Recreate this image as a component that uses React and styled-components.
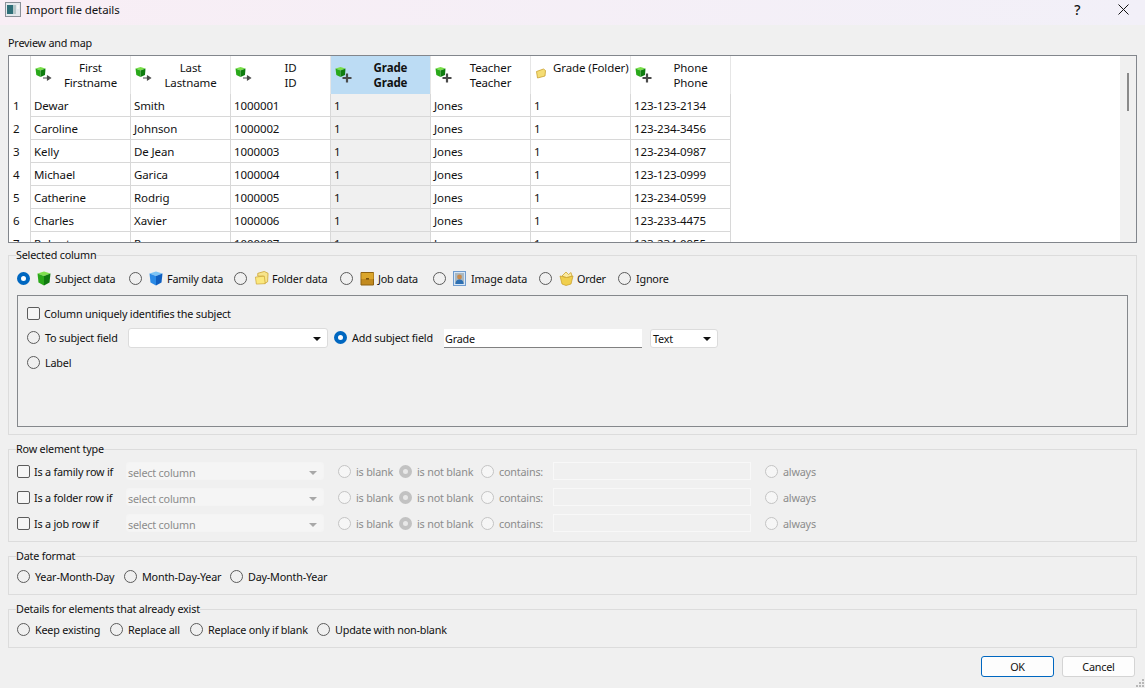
import React from 'react';
import styled, { createGlobalStyle } from 'styled-components';

const GlobalStyle = createGlobalStyle`
  html, body {
    margin: 0;
    padding: 0;
    background: #f0f0f0;
  }
  * {
    box-sizing: border-box;
  }
`;

const columns = [
  { top: 'First', bottom: 'Firstname', icon: 'link' },
  { top: 'Last', bottom: 'Lastname', icon: 'link' },
  { top: 'ID', bottom: 'ID', icon: 'link' },
  { top: 'Grade', bottom: 'Grade', icon: 'add', selected: true },
  { top: 'Teacher', bottom: 'Teacher', icon: 'add' },
  { top: 'Grade (Folder)', icon: 'folder' },
  { top: 'Phone', bottom: 'Phone', icon: 'add' },
];

const rows = [
  ['Dewar', 'Smith', '1000001', '1', 'Jones', '1', '123-123-2134'],
  ['Caroline', 'Johnson', '1000002', '1', 'Jones', '1', '123-234-3456'],
  ['Kelly', 'De Jean', '1000003', '1', 'Jones', '1', '123-234-0987'],
  ['Michael', 'Garica', '1000004', '1', 'Jones', '1', '123-123-0999'],
  ['Catherine', 'Rodrig', '1000005', '1', 'Jones', '1', '123-234-0599'],
  ['Charles', 'Xavier', '1000006', '1', 'Jones', '1', '123-233-4475'],
  ['Robert', 'Rare', '1000007', '1', 'Jones', '1', '123-234-0955'],
];

const dataTypes = [
  { label: 'Subject data', icon: 'cube', checked: true, width: 112 },
  { label: 'Family data', icon: 'blue', width: 105 },
  { label: 'Folder data', icon: 'folder', width: 106 },
  { label: 'Job data', icon: 'job', width: 93 },
  { label: 'Image data', icon: 'image', width: 106 },
  { label: 'Order', icon: 'order', width: 79 },
  { label: 'Ignore', width: 60 },
];

const rowTypes = ['Is a family row if', 'Is a folder row if', 'Is a job row if'];

const Page = styled.div`
  width: 1145px;
  height: 688px;
  position: relative;
  overflow: hidden;
  background: #f0f0f0;
  color: #111;
  font-family: 'Noto Sans', 'Liberation Sans', sans-serif;
  font-size: 10.8px;
  letter-spacing: -0.2px;
`;

const TitleBar = styled.div`
  height: 25px;
  display: flex;
  align-items: center;
  padding: 0 0 7px 5px;
  background: linear-gradient(90deg, #f8eef5, #f2f0f8);
  font-size: 11.5px;
  letter-spacing: -0.1px;
`;

const TitleText = styled.span`
  margin-left: 5px;
  flex: 1;
`;

const TitleButton = styled.button`
  width: 46px;
  height: 18px;
  padding: 0 0 0 3px;
  border: 0;
  background: none;
  display: flex;
  align-items: center;
  justify-content: center;
  font: 500 14px 'Noto Sans', sans-serif;
  color: #111;
`;

const Body = styled.div`
  padding: 0 8px;
  display: flex;
  flex-direction: column;
`;

const SectionLabel = styled.div`
  height: 30px;
  padding-top: 10px;
  line-height: 15px;
`;

const TableFrame = styled.div`
  height: 188px;
  border: 1px solid #82868c;
  background: #fff;
  position: relative;
  overflow: hidden;
  font-size: 11.5px;
  letter-spacing: -0.1px;
`;

const GridTable = styled.div`
  display: grid;
  grid-template-columns: 22px repeat(7, 100px);
  grid-auto-rows: 23px;
  grid-template-rows: 38px;
  width: 722px;
`;

const HeaderCell = styled.div`
  display: flex;
  align-items: flex-start;
  padding: 4px 2px 0 4px;
  border-right: 1px solid #e6e6e6;
  line-height: 15px;
  background: ${(p) => (p.$selected ? '#bcdcf4' : '#fff')};
  font-weight: ${(p) => (p.$selected ? 700 : 400)};
`;

const HeaderIcon = styled.span`
  width: 18px;
  height: 18px;
  margin-top: 6px;
  flex: none;
`;

const HeaderLabel = styled.div`
  flex: 1;
  text-align: center;
  white-space: nowrap;
`;

const NumberCell = styled.div`
  padding-left: 4px;
  line-height: 24px;
  border-right: 1px solid #d8d8d8;
`;

const Cell = styled.div`
  padding-left: 3px;
  line-height: 24px;
  border-right: 1px solid #d8d8d8;
  border-bottom: 1px solid #d8d8d8;
  background: ${(p) => (p.$selected ? '#f0f0f0' : '#fff')};
`;

const ScrollTrack = styled.div`
  position: absolute;
  top: 0;
  right: 0;
  bottom: 0;
  width: 16px;
  background: #f0f0f0;
`;

const ScrollThumb = styled.div`
  position: absolute;
  top: 17px;
  left: 7px;
  width: 2px;
  height: 38px;
  background: #8a8a8a;
`;

const Group = styled.fieldset`
  height: ${(p) => p.$height}px;
  margin: ${(p) => p.$top}px 0 0;
  padding: ${(p) => p.$pad}px 8px 0;
  min-width: 0;
  border: 1px solid #dcdcdc;
`;

const Legend = styled.legend`
  padding: 0;
  margin-left: -1px;
  line-height: 14px;
  height: 14px;
  background: #f0f0f0;
`;

const FlowRow = styled.div`
  display: flex;
  align-items: center;
  height: 18px;
`;

const Item = styled.label`
  display: flex;
  align-items: center;
  flex: none;
  width: ${(p) => (p.$width ? `${p.$width}px` : 'auto')};
  height: 18px;
  white-space: nowrap;
  color: ${(p) => (p.$disabled ? '#8c8c8c' : 'inherit')};
`;

const RadioMark = styled.span`
  width: 13px;
  height: 13px;
  flex: none;
  margin-right: 5px;
  border-radius: 50%;
  border: 1px solid ${(p) => (p.$disabled ? '#c4c4c4' : '#5c5c5c')};
  background: ${(p) => (p.$disabled ? '#f6f6f6' : 'transparent')};

  ${(p) =>
    p.$checked &&
    `
    border: 4px solid ${p.$disabled ? '#c2c2c2' : '#0067c0'};
    background: ${p.$disabled ? '#e8e8e8' : '#fff'};
  `}
`;

const CheckMark = styled.span`
  width: 13px;
  height: 13px;
  flex: none;
  margin-right: 4px;
  border-radius: 2px;
  border: 1px solid #5c5c5c;
  background: #f6f6f6;
`;

const ItemIcon = styled.span`
  width: 15px;
  height: 16px;
  flex: none;
  margin: 0 3px 0 2px;
  display: flex;
  align-items: center;
`;

const InnerBox = styled.div`
  height: 132px;
  margin-top: 8px;
  padding: 8px 9px 0;
  border: 1px solid #85888c;
  display: grid;
  grid-template-rows: 20px 21px 20px;
  row-gap: 4px;
`;

const InnerRow = styled.div`
  display: flex;
  align-items: flex-start;
  height: 20px;

  ${Item} {
    height: 19px;
  }
`;

const Combo = styled.div`
  width: ${(p) => p.$width}px;
  height: ${(p) => p.$height || 20}px;
  margin: ${(p) => p.$margin || '0'};
  flex: none;
  display: flex;
  align-items: center;
  justify-content: space-between;
  padding: ${(p) => (p.$disabled ? '3px 6px 0 1px' : '1px 6px 0 2px')};
  border-radius: 3px;
  border: 1px solid ${(p) => (p.$disabled ? '#f4f4f4' : '#dcdcdc')};
  background: ${(p) => (p.$disabled ? '#f5f5f5' : '#fff')};
  color: ${(p) => (p.$disabled ? '#8c8c8c' : 'inherit')};
  line-height: 16px;
`;

const Caret = styled.span`
  width: 0;
  height: 0;
  border-left: 4px solid transparent;
  border-right: 4px solid transparent;
  border-top: 4px solid ${(p) => (p.$disabled ? '#a8a8a8' : '#111')};
`;

const TextField = styled.div`
  width: ${(p) => p.$width}px;
  height: ${(p) => p.$height || 19}px;
  margin: ${(p) => p.$margin || '0'};
  flex: none;
  padding: 2px 1px 0;
  line-height: 16px;
  background: ${(p) => (p.$disabled ? 'transparent' : '#fff')};
  border: ${(p) => (p.$disabled ? '1px solid #f8f8f8' : '0')};
  border-bottom: 1px solid ${(p) => (p.$disabled ? '#f8f8f8' : '#808080')};
`;

const ConditionRows = styled.div`
  display: flex;
  flex-direction: column;
  gap: 8px;
`;

const Footer = styled.div`
  display: flex;
  justify-content: flex-end;
  gap: 8px;
  margin-top: 8px;
  padding-right: 2px;
`;

const DialogButton = styled.button`
  width: 73px;
  height: 21px;
  padding: 0;
  background: #fdfdfd;
  border-radius: 3px;
  border: 1px solid ${(p) => (p.$primary ? '#0067c0' : '#d4d4d4')};
  font: inherit;
  letter-spacing: inherit;
  color: #111;
`;

const Grip = styled.svg`
  position: absolute;
  right: 0;
  bottom: 0;
`;

const AppIcon = () => (
  <svg width="16" height="15" viewBox="0 0 16 15">
    <rect x="0.5" y="0.5" width="15" height="14" fill="#e4e8ec" stroke="#8a9098" />
    <rect x="2" y="3" width="6" height="9" fill="#2e6f78" />
    <rect x="8" y="3" width="3" height="9" fill="#b5c7c9" />
    <rect x="12" y="3" width="2" height="4" fill="#f4f4f4" />
  </svg>
);

const Cube = ({ light, main, dark }) => (
  <svg width="14" height="15" viewBox="0 0 14 15">
    <path d="M7 0.5 13.5 2.5 7 5 0.5 2.5z" fill={light} />
    <path d="M0.5 2.5 7 5 7 14.5 1.5 11.5z" fill={main} />
    <path d="M13.5 2.5 7 5 7 14.5 12.5 11.5z" fill={dark} />
  </svg>
);

const FolderIcon = () => (
  <svg width="16" height="16" viewBox="0 0 16 16">
    <path d="M4 3 11 1 15 3 14.5 12 11 14 10 6 4 6z" fill="#f7e48c" stroke="#c9a02e" strokeWidth="0.8" />
    <path d="M1.5 7 11 6 12 14 2.5 14.5z" fill="#fbe87e" stroke="#c9a02e" strokeWidth="0.7" />
  </svg>
);

const JobIcon = () => (
  <svg width="15" height="15" viewBox="0 0 15 15">
    <path d="M1 1.5h12.5v12.5H1z" fill="#c28a1e" stroke="#8f6210" />
    <path d="M1.5 2h12v6h-12z" fill="#dba62c" />
    <rect x="6" y="7" width="3" height="1.6" fill="#7a520c" />
  </svg>
);

const ImageIcon = () => (
  <svg width="13" height="15" viewBox="0 0 13 15">
    <rect x="0.5" y="0.5" width="12" height="14" fill="#d7e6f6" stroke="#6f9ccf" />
    <rect x="2" y="2" width="9" height="11" fill="#a9b8c2" />
    <circle cx="6.5" cy="6" r="2.4" fill="#c98a4c" />
    <path d="M2.5 13c0-3.5 2-4.5 4-4.5s4 1 4 4.5z" fill="#2d6fb2" />
  </svg>
);

const OrderIcon = () => (
  <svg width="15" height="15" viewBox="0 0 15 15">
    <path d="M1 5 3 13 7 14.5 12 13 14 5 7.5 6.5z" fill="#f0cf4e" stroke="#c79c22" strokeWidth="0.7" />
    <path d="M3 5 7 1 9.5 3.5 12 1.5 13 5 7.5 6.5z" fill="#fbeaa0" stroke="#c79c22" strokeWidth="0.7" />
  </svg>
);

const MapIcon = ({ kind }) => {
  if (kind === 'folder') {
    return (
      <svg width="18" height="18" viewBox="0 0 18 18">
        <path d="M1.5 5.5 8.5 3 10.5 4.5 10 10 2.5 12z" fill="#f5dd74" stroke="#c9a02e" strokeWidth="0.8" />
      </svg>
    );
  }
  return (
    <svg width="18" height="18" viewBox="0 0 18 18">
      <path d="M5.5 1 10.5 2.5 5.5 4.5 0.5 2.5z" fill="#79e04a" />
      <path d="M0.5 2.5 5.5 4.5 5.5 11 1.3 9z" fill="#29a81a" />
      <path d="M10.5 2.5 5.5 4.5 5.5 11 10 9z" fill="#0f7d10" />
      {kind === 'add' ? (
        <path d="M12 7.5v9M7.5 12h9" stroke="#4a4a4a" strokeWidth="2.2" fill="none" />
      ) : (
        <path d="M8 12h6M12.5 10 15.5 12 12.5 14z" stroke="#4a4a4a" strokeWidth="1.2" fill="#4a4a4a" />
      )}
    </svg>
  );
};

const TypeIcon = ({ kind }) => {
  if (kind === 'cube') return <Cube light="#7fe04e" main="#2aa81a" dark="#107a10" />;
  if (kind === 'blue') return <Cube light="#7cc4f5" main="#2a8ae6" dark="#0f5fc0" />;
  if (kind === 'folder') return <FolderIcon />;
  if (kind === 'job') return <JobIcon />;
  if (kind === 'image') return <ImageIcon />;
  return <OrderIcon />;
};

const Radio = ({ label, checked, disabled, width }) => (
  <Item $width={width} $disabled={disabled}>
    <RadioMark $checked={checked} $disabled={disabled} />
    {label}
  </Item>
);

const Check = ({ label, width }) => (
  <Item $width={width}>
    <CheckMark />
    {label}
  </Item>
);

const App = () => (
  <Page>
    <GlobalStyle />
    <TitleBar>
      <AppIcon />
      <TitleText>Import file details</TitleText>
      <TitleButton>?</TitleButton>
      <TitleButton>
        <svg width="11" height="11" viewBox="0 0 11 11">
          <path d="M0.5 0.5 10.5 10.5M10.5 0.5 0.5 10.5" stroke="#111" fill="none" />
        </svg>
      </TitleButton>
    </TitleBar>
    <Body>
      <SectionLabel>Preview and map</SectionLabel>
      <TableFrame>
        <GridTable>
          <NumberCell />
          {columns.map((col) => (
            <HeaderCell key={col.top} $selected={col.selected}>
              <HeaderIcon>
                <MapIcon kind={col.icon} />
              </HeaderIcon>
              <HeaderLabel>
                {col.top}
                {col.bottom && <br />}
                {col.bottom}
              </HeaderLabel>
            </HeaderCell>
          ))}
          {rows.map((row, i) => (
            <React.Fragment key={row[2]}>
              <NumberCell>{i + 1}</NumberCell>
              {row.map((value, c) => (
                <Cell key={c} $selected={c === 3}>{value}</Cell>
              ))}
            </React.Fragment>
          ))}
        </GridTable>
        <ScrollTrack>
          <ScrollThumb />
        </ScrollTrack>
      </TableFrame>

      <Group $height={187} $top={5} $pad={7}>
        <Legend>Selected column</Legend>
        <FlowRow>
          {dataTypes.map((t) => (
            <Item key={t.label} $width={t.width}>
              <RadioMark $checked={t.checked} />
              {t.icon && (
                <ItemIcon>
                  <TypeIcon kind={t.icon} />
                </ItemIcon>
              )}
              {t.label}
            </Item>
          ))}
        </FlowRow>
        <InnerBox>
          <InnerRow>
            <Check label="Column uniquely identifies the subject" />
          </InnerRow>
          <InnerRow>
            <Radio label="To subject field" width={101} />
            <Combo $width={200} $margin="0 6px 0 0">
              <span />
              <Caret />
            </Combo>
            <Radio label="Add subject field" checked width={110} />
            <TextField $width={198} $margin="1px 8px 0 0">Grade</TextField>
            <Combo $width={68} $height={19} $margin="1px 0 0">
              Text
              <Caret />
            </Combo>
          </InnerRow>
          <InnerRow>
            <Radio label="Label" />
          </InnerRow>
        </InnerBox>
      </Group>

      <Group $height={100} $top={7} $pad={6}>
        <Legend>Row element type</Legend>
        <ConditionRows>
          {rowTypes.map((label) => (
            <FlowRow key={label}>
              <Check label={label} width={109} />
              <Combo $width={198} $height={18} $margin="0 14px 0 0" $disabled>
                select column
                <Caret $disabled />
              </Combo>
              <Radio label="is blank" width={61} disabled />
              <Radio label="is not blank" width={82} checked disabled />
              <Radio label="contains:" width={72} disabled />
              <TextField $width={198} $height={18} $margin="0 14px 0 0" $disabled />
              <Radio label="always" disabled />
            </FlowRow>
          ))}
        </ConditionRows>
      </Group>

      <Group $height={46} $top={7} $pad={4}>
        <Legend>Date format</Legend>
        <FlowRow>
          <Radio label="Year-Month-Day" width={107} />
          <Radio label="Month-Day-Year" width={106} />
          <Radio label="Day-Month-Year" />
        </FlowRow>
      </Group>

      <Group $height={46} $top={7} $pad={4}>
        <Legend>Details for elements that already exist</Legend>
        <FlowRow>
          <Radio label="Keep existing" width={93} />
          <Radio label="Replace all" width={80} />
          <Radio label="Replace only if blank" width={127} />
          <Radio label="Update with non-blank" />
        </FlowRow>
      </Group>

      <Footer>
        <DialogButton $primary>OK</DialogButton>
        <DialogButton>Cancel</DialogButton>
      </Footer>
    </Body>
    <Grip width="11" height="11" viewBox="0 0 11 11">
      <path d="M8 2h2v2H8zM5 5h2v2H5zM8 5h2v2H8zM2 8h2v2H2zM5 8h2v2H5zM8 8h2v2H8z" fill="#b8b8b8" />
    </Grip>
  </Page>
);

export default App;
